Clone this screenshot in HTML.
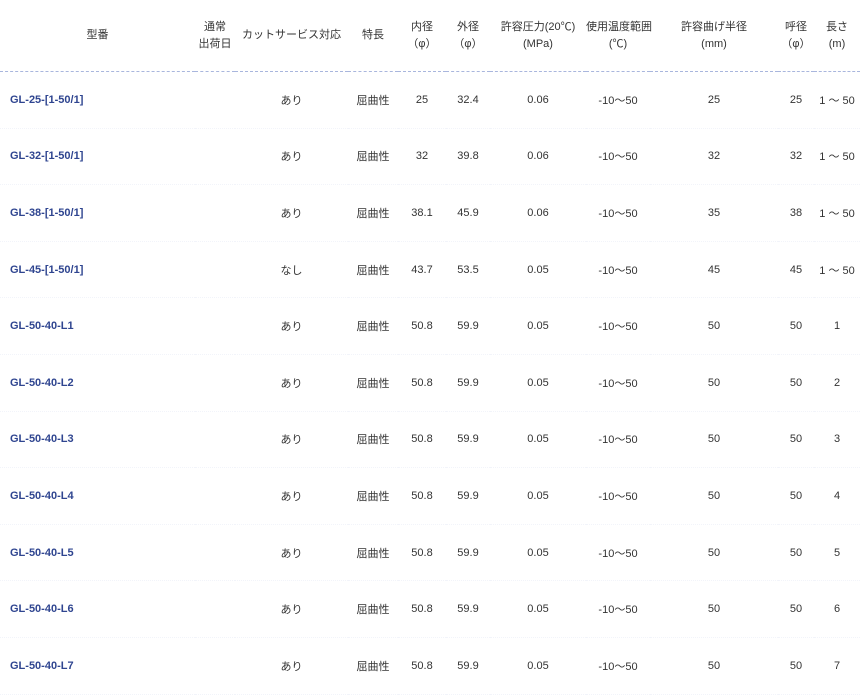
<!DOCTYPE html>
<html><head><meta charset="utf-8"><style>
body{margin:0;background:#fff;width:860px;height:690px;overflow:hidden;font-family:"Liberation Sans","Noto Sans CJK JP",sans-serif;font-size:11px;color:#333}
table{border-collapse:collapse;table-layout:fixed;width:860px}
td,th{text-align:center;padding:0;white-space:nowrap;overflow:visible}
th{font-weight:normal;height:71px;line-height:17px;border-bottom:1px dashed #a9b6dd;padding-top:0px}
td{height:55.6px;border-bottom:1px dotted #f2f4fa}
td.m{text-align:left;padding-left:10px;color:#2f4590;font-weight:bold;font-size:11px}
</style></head><body>
<table>
<colgroup><col style="width:195px"><col style="width:40px"><col style="width:113px"><col style="width:50px"><col style="width:48px"><col style="width:44px"><col style="width:96px"><col style="width:64px"><col style="width:128px"><col style="width:36px"><col style="width:46px"></colgroup>
<tr><th>型番</th><th>通常<br>出荷日</th><th>カットサービス対応</th><th>特長</th><th>内径<br>（φ）</th><th>外径<br>（φ）</th><th>許容圧力(20℃)<br>(MPa)</th><th>使用温度範囲<br>(℃)</th><th>許容曲げ半径<br>(mm)</th><th>呼径<br>（φ）</th><th>長さ<br>(m)</th></tr>
<tr><td class="m">GL-25-[1-50/1]</td><td></td><td>あり</td><td>屈曲性</td><td>25</td><td>32.4</td><td>0.06</td><td>-10～50</td><td>25</td><td>25</td><td>1 ～ 50</td></tr>
<tr><td class="m">GL-32-[1-50/1]</td><td></td><td>あり</td><td>屈曲性</td><td>32</td><td>39.8</td><td>0.06</td><td>-10～50</td><td>32</td><td>32</td><td>1 ～ 50</td></tr>
<tr><td class="m">GL-38-[1-50/1]</td><td></td><td>あり</td><td>屈曲性</td><td>38.1</td><td>45.9</td><td>0.06</td><td>-10～50</td><td>35</td><td>38</td><td>1 ～ 50</td></tr>
<tr><td class="m">GL-45-[1-50/1]</td><td></td><td>なし</td><td>屈曲性</td><td>43.7</td><td>53.5</td><td>0.05</td><td>-10～50</td><td>45</td><td>45</td><td>1 ～ 50</td></tr>
<tr><td class="m">GL-50-40-L1</td><td></td><td>あり</td><td>屈曲性</td><td>50.8</td><td>59.9</td><td>0.05</td><td>-10～50</td><td>50</td><td>50</td><td>1</td></tr>
<tr><td class="m">GL-50-40-L2</td><td></td><td>あり</td><td>屈曲性</td><td>50.8</td><td>59.9</td><td>0.05</td><td>-10～50</td><td>50</td><td>50</td><td>2</td></tr>
<tr><td class="m">GL-50-40-L3</td><td></td><td>あり</td><td>屈曲性</td><td>50.8</td><td>59.9</td><td>0.05</td><td>-10～50</td><td>50</td><td>50</td><td>3</td></tr>
<tr><td class="m">GL-50-40-L4</td><td></td><td>あり</td><td>屈曲性</td><td>50.8</td><td>59.9</td><td>0.05</td><td>-10～50</td><td>50</td><td>50</td><td>4</td></tr>
<tr><td class="m">GL-50-40-L5</td><td></td><td>あり</td><td>屈曲性</td><td>50.8</td><td>59.9</td><td>0.05</td><td>-10～50</td><td>50</td><td>50</td><td>5</td></tr>
<tr><td class="m">GL-50-40-L6</td><td></td><td>あり</td><td>屈曲性</td><td>50.8</td><td>59.9</td><td>0.05</td><td>-10～50</td><td>50</td><td>50</td><td>6</td></tr>
<tr><td class="m">GL-50-40-L7</td><td></td><td>あり</td><td>屈曲性</td><td>50.8</td><td>59.9</td><td>0.05</td><td>-10～50</td><td>50</td><td>50</td><td>7</td></tr>
</table>
</body></html>
